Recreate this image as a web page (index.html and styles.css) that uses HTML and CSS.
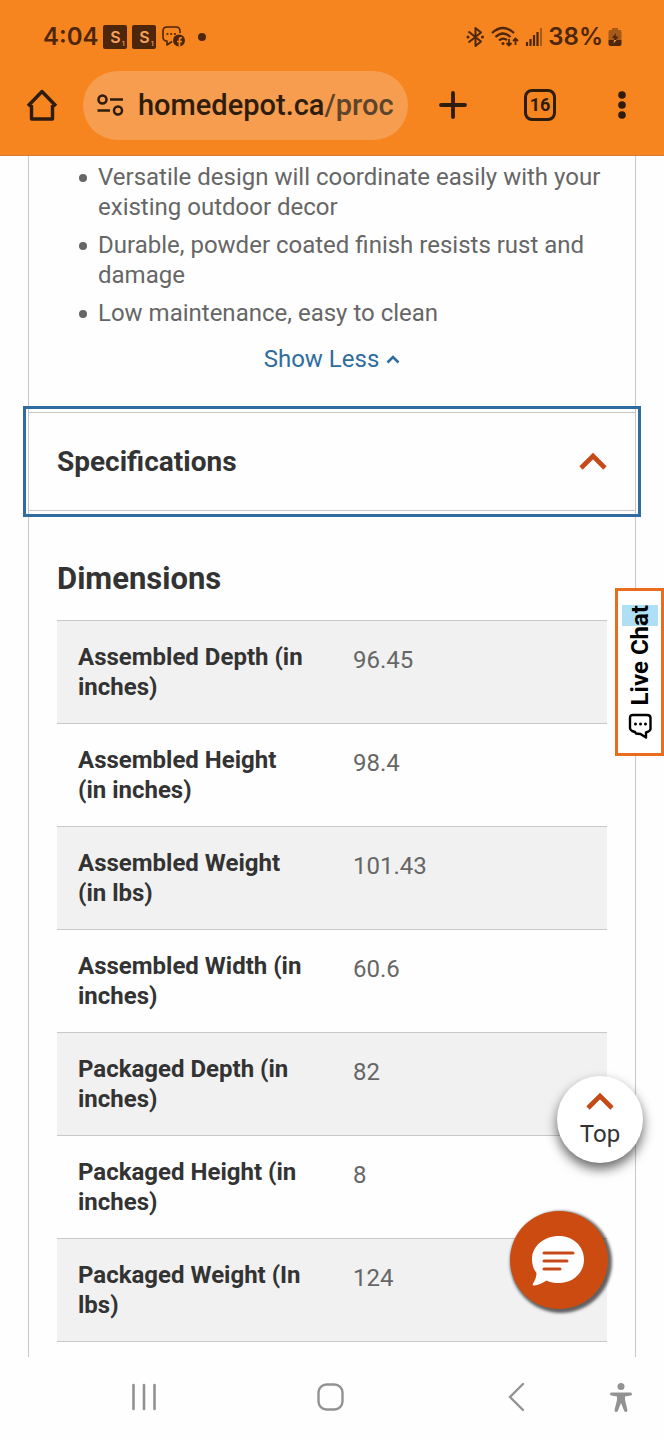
FILE: index.html
```html
<!DOCTYPE html>
<html lang="en">

<head>
    <meta charset="UTF-8">
    <meta name="viewport" content="width=device-width, initial-scale=1.0">
    <title>Specifications</title>
    <link rel="stylesheet" href="styles.css">
</head>

<body>
    <header class="header">
        <!-- status bar -->
        <div class="status">
            <span class="time">4:04</span>
            <span class="app">S<small>1</small></span>
            <span class="app">S<small>1</small></span>
            <svg width="26" height="24" viewBox="0 0 26 24">
                <path d="M11 16.500 L6 20 V16 Q2 16 2 12 V6 Q2 2 6 2 H15 Q19 2 19 6 V8" fill="none" stroke="#4d260b" stroke-width="1.600" stroke-linejoin="round" />
                <circle cx="6.500" cy="9" r="1.100" fill="#4d260b" />
                <circle cx="10.200" cy="9" r="1.100" fill="#4d260b" />
                <circle cx="13.900" cy="9" r="1.100" fill="#4d260b" />
                <circle cx="18" cy="15.500" r="6" fill="#4d260b" />
                <path d="M18.500 21.500 V14.500 Q18.500 12.500 21 12.800 M16 16.500 H21" fill="none" stroke="#f6851f" stroke-width="1.700" />
            </svg>
            <i class="more-dot"></i>
            <div class="status-right">
                <svg width="20" height="22" viewBox="0 0 20 22">
                    <path d="M3.500 5.500 L16 15.500 L10.500 20 V2 L16 6.500 L3.500 16.500" fill="none" stroke="#4d260b" stroke-width="2" stroke-linejoin="round" />
                    <circle cx="3" cy="11" r="1.500" fill="#4d260b" />
                    <circle cx="17.500" cy="11" r="1.500" fill="#4d260b" />
                </svg>
                <svg width="30" height="22" viewBox="0 0 30 22">
                    <path d="M2 7 Q13 -3 24 7 M5.500 11 Q13 4 20.500 11 M9 14.500 Q13 11 17 14" fill="none" stroke="#4d260b" stroke-width="2.200" />
                    <circle cx="13" cy="17.500" r="1.500" fill="#4d260b" />
                    <path d="M19 13 V19 M16.500 17 L19 19.500 L21.500 17 M25.500 19 V13 M23 15 L25.500 12.500 L28 15" fill="none" stroke="#4d260b" stroke-width="1.800" />
                </svg>
                <svg width="18" height="20" viewBox="0 0 18 20">
                    <path d="M2 19 V15 M5.500 19 V12 M9 19 V8 M12.500 19 V5" stroke="#4d260b" stroke-width="2.200" />
                    <path d="M16 19 V1" stroke="#a65a18" stroke-width="2" />
                </svg>
                <span class="battery">38%</span>
                <svg width="14" height="20" viewBox="0 0 14 20">
                    <path d="M4 1 H10 V3 H12 Q13.500 3 13.500 5 V13 H0.500 V5 Q0.500 3 2 3 H4 Z" fill="#a65a18" />
                    <path d="M0.500 13 H13.500 V17 Q13.500 19 11.500 19 H2.500 Q0.500 19 0.500 17 Z" fill="#4d260b" />
                    <path d="M8 6 L4 11 H6.500 L6 13 H8 L10.500 9.500 H7.500 Z" fill="#4d260b" />
                    <path d="M6.200 13 H8.500 L5.500 16.500 Z" fill="#f6a45a" />
                </svg>
            </div>
        </div>
        <!-- browser toolbar -->
        <div class="toolbar">
            <button class="home" aria-label="Home">
                <svg width="32" height="34" viewBox="0 0 32 34">
                    <path d="M5.500 17 V31 H26.500 V17 M2 18 L16 3.500 L30 18" fill="none" stroke="#2e1c0c" stroke-width="3.400" stroke-linejoin="round" />
                </svg>
            </button>
            <a class="url" href="#">
                <svg width="28" height="24" viewBox="0 0 28 24">
                    <g fill="none" stroke="#2e1c0c" stroke-width="2.500">
                        <circle cx="6.500" cy="6.500" r="4" />
                        <path d="M14 6.500 H27 M1.500 17.500 H14" />
                        <circle cx="22" cy="17.500" r="4" />
                    </g>
                </svg>
                <span class="url-text">homedepot.ca<span>/proc</span></span>
            </a>
            <button class="new-tab" aria-label="New tab">
                <svg width="28" height="28" viewBox="0 0 28 28">
                    <path d="M14 2 V26 M2 14 H26" stroke="#2e1c0c" stroke-width="3.800" stroke-linecap="round" />
                </svg>
            </button>
            <button class="tabs" aria-label="Tabs">16</button>
            <button class="menu" aria-label="Menu">
                <svg width="8" height="28" viewBox="0 0 8 28">
                    <g fill="#2e1c0c">
                        <circle cx="4" cy="4" r="3.800" />
                        <circle cx="4" cy="14" r="3.800" />
                        <circle cx="4" cy="24" r="3.800" />
                    </g>
                </svg>
            </button>
        </div>
    </header>

    <main class="product">
        <ul class="features">
            <li>Versatile design will coordinate easily with your existing outdoor decor</li>
            <li>Durable, powder coated finish resists rust and damage</li>
            <li>Low maintenance, easy to clean</li>
        </ul>
        <a class="show-less" href="#">Show Less
            <svg width="14" height="10" viewBox="0 0 14 10">
                <path d="M1.500 8.500 L7 3 L12.500 8.500" fill="none" stroke="#2f6c9f" stroke-width="2.600" />
            </svg>
        </a>
        <button class="accordion">
            Specifications
            <svg width="28" height="20" viewBox="0 0 28 20">
                <path d="M2 16 L14 4 L26 16" fill="none" stroke="#c64a17" stroke-width="4.600" />
            </svg>
        </button>
        <section class="specs">
            <h2>Dimensions</h2>
            <table>
                <tr>
                    <th scope="row">Assembled Depth (in inches)</th>
                    <td>96.45</td>
                </tr>
                <tr>
                    <th scope="row">Assembled Height (in inches)</th>
                    <td>98.4</td>
                </tr>
                <tr>
                    <th scope="row">Assembled Weight (in lbs)</th>
                    <td>101.43</td>
                </tr>
                <tr>
                    <th scope="row">Assembled Width (in inches)</th>
                    <td>60.6</td>
                </tr>
                <tr>
                    <th scope="row">Packaged Depth (in inches)</th>
                    <td>82</td>
                </tr>
                <tr>
                    <th scope="row">Packaged Height (in inches)</th>
                    <td>8</td>
                </tr>
                <tr>
                    <th scope="row">Packaged Weight (In lbs)</th>
                    <td>124</td>
                </tr>
            </table>
        </section>
    </main>

    <!-- floating buttons -->
    <button class="live-chat">
        <svg width="24" height="26" viewBox="0 0 24 26">
            <path d="M5 2 H19 Q22.500 2 22.500 5 V16 Q22.500 18 18 19.500 V24.500 L12.500 21 L8 20.500 L7 19 L4 18 Q2 17 2 15 V5 Q2 2 5 2 Z" fill="none" stroke="#000" stroke-width="2.400" stroke-linejoin="round" />
            <circle cx="7.500" cy="11" r="1.500" />
            <circle cx="12.500" cy="11" r="1.500" />
            <circle cx="17.500" cy="11" r="1.500" />
        </svg>
        <span>Live Ch<mark>at</mark></span>
    </button>
    <button class="top">
        <svg width="28" height="20" viewBox="0 0 28 20">
            <path d="M2 17 L14 5 L26 17" fill="none" stroke="#c64a17" stroke-width="4.600" />
        </svg>
        Top
    </button>
    <button class="chat" aria-label="Chat">
        <svg width="54" height="52" viewBox="0 0 54 52">
            <path d="M27 2 C41 2 52 12 52 25.500 C52 39 41 49 27 49 C22.500 49 18 48.500 14.500 46.500 C10 49.500 6 51 2 51.500 C0.500 51.500 0.500 50.500 1 49.500 C3 46 4.500 43 4.500 39 C1.500 35 0 31 0 25.500 C0 12 12 2 27 2 Z" fill="#fff" />
            <path d="M12 19 H41 M12 27 H35 M12 35 H28" stroke="#c64a17" stroke-width="3" stroke-linecap="round" />
        </svg>
    </button>

    <nav class="navbar">
        <div class="nav-keys">
            <button aria-label="Recent apps">
                <svg width="26" height="30" viewBox="0 0 26 30">
                    <path d="M2.500 3 V27 M13 3 V27 M23.500 3 V27" stroke="#929292" stroke-width="2.600" stroke-linecap="round" />
                </svg>
            </button>
            <button aria-label="Home">
                <svg width="28" height="30" viewBox="0 0 28 30">
                    <rect x="1.500" y="2.500" width="24" height="25" rx="8" fill="none" stroke="#929292" stroke-width="2.400" />
                </svg>
            </button>
            <button aria-label="Back">
                <svg width="20" height="30" viewBox="0 0 20 30">
                    <path d="M18 2 L5 15 L18 28" fill="none" stroke="#929292" stroke-width="2.400" stroke-linecap="round" />
                </svg>
            </button>
        </div>
        <button aria-label="Accessibility">
            <svg width="24" height="30" viewBox="0 0 24 30">
                <g fill="#929292">
                    <circle cx="12" cy="4.500" r="3.500" />
                    <path d="M2.500 10.500 H21.500 Q23 10.500 23 12 Q23 13.500 21.500 13.500 L16 14.500 V18 L18.500 28 Q18.500 30 17 30 Q15.500 30 15 28.500 L12 21 L9 28.500 Q8.500 30 7 30 Q5.500 30 5.500 28 L8 18 V14.500 L2.500 13.500 Q1 13.500 1 12 Q1 10.500 2.500 10.500 Z" />
                </g>
            </svg>
        </button>
    </nav>
</body>

</html>
```
FILE: styles.css
```css
* {
    box-sizing: border-box;
}

body {
    position: relative;
    margin: 0;
    background-color: #fefefe;
    color: #666;
    font-family: Roboto, "Liberation Sans", sans-serif;
    font-size: 24px;
    line-height: 30px;
}

button {
    margin: 0;
    padding: 0;
    border: 0;
    background: none;
    font: inherit;
    color: inherit;
}

a {
    text-decoration: none;
}

svg {
    display: block;
    flex: none;
}

/* header */
.header {
    background-color: #f6851f;
    border-bottom: 1px solid #d67b35;
    color: #2e1c0c;
}

.status {
    display: flex;
    align-items: center;
    height: 70px;
    padding: 4px 42px 0 43px;
    color: #4d260b;
    font-family: Inter, Roboto, sans-serif;
    font-size: 24px;
    font-weight: 600;
}

.time {
    margin-right: 5px;
}

.app {
    position: relative;
    width: 24px;
    height: 24px;
    margin-right: 5px;
    border-radius: 2px;
    background-color: #4d260b;
    color: #f6a45a;
    font-size: 16px;
    line-height: 24px;
    text-align: center;
}

.app small {
    position: absolute;
    right: 3px;
    bottom: 2px;
    font-size: 6px;
    line-height: 6px;
}

.more-dot {
    width: 8px;
    height: 8px;
    margin-left: 11px;
    border-radius: 50%;
    background-color: #4d260b;
}

.status-right {
    display: flex;
    align-items: center;
    gap: 5px;
    margin-left: auto;
}

.toolbar {
    display: flex;
    align-items: center;
    height: 85px;
    padding: 0 38px 15px 26px;
}

.url {
    display: flex;
    flex: 1;
    align-items: center;
    gap: 14px;
    min-width: 0;
    height: 69px;
    margin: 0 31px 0 25px;
    padding: 0 12px 0 13px;
    border-radius: 35px;
    background-color: #f79d4f;
    color: #2e1c0c;
}

.url-text {
    font-size: 29px;
    font-weight: 500;
    line-height: 40px;
    white-space: nowrap;
}

.url-text span {
    color: #5c452c;
}

.tabs {
    width: 32px;
    height: 32px;
    margin: 0 62px 0 57px;
    border: 3px solid #2e1c0c;
    border-radius: 8px;
    font-size: 18px;
    font-weight: 700;
    line-height: 26px;
}

/* product card */
.product {
    display: flow-root;
    margin: 0 28px;
    border: solid #c8c8c8;
    border-width: 0 1px;
}

.features {
    margin: 6px 0 16px;
    padding: 0 28px 0 50px;
    list-style: none;
}

.features li {
    display: flex;
    gap: 11px;
    margin-bottom: 8px;
}

.features li::before {
    content: "";
    flex: none;
    width: 8px;
    height: 8px;
    margin-top: 12px;
    border-radius: 50%;
    background-color: #666;
}

.show-less {
    display: flex;
    align-items: center;
    justify-content: center;
    gap: 7px;
    color: #2f6c9f;
}

.accordion {
    display: flex;
    align-items: center;
    justify-content: space-between;
    width: 100%;
    height: 99px;
    margin-top: 38px;
    padding: 0 28px;
    border: solid #c8c8c8;
    border-width: 1px 0;
    outline: 3px solid #2f6c9f;
    outline-offset: 3px;
    color: #333;
    font-size: 28px;
    font-weight: 700;
}

.specs {
    padding: 0 28px 15px;
}

.specs h2 {
    margin: 48px 0 21px;
    color: #333;
    font-size: 31px;
    line-height: 40px;
}

.specs table {
    width: 100%;
    border-collapse: collapse;
    border-top: 1px solid #c8c8c8;
}

.specs tr {
    border-bottom: 1px solid #c8c8c8;
}

.specs tr:nth-child(odd) {
    background-color: #f1f1f1;
}

.specs th,
.specs td {
    padding: 21px;
    text-align: left;
    vertical-align: top;
}

.specs th {
    width: 50%;
    padding-right: 26px;
    color: #333;
    font-weight: 700;
}

.specs td {
    padding-top: 24px;
}

/* floating buttons */
.live-chat {
    position: absolute;
    top: 588px;
    right: 0;
    display: flex;
    align-items: center;
    gap: 8px;
    width: 49px;
    height: 168px;
    padding: 14px 0;
    border: 3px solid #e96d1d;
    background-color: #fff;
    color: #000;
    font-weight: 700;
    white-space: nowrap;
    writing-mode: sideways-lr;
}

.live-chat mark {
    padding-block: 4px;
    background-color: #afdff4;
}

.top {
    position: absolute;
    top: 1076px;
    right: 21px;
    display: flex;
    flex-direction: column;
    align-items: center;
    gap: 8px;
    width: 86px;
    height: 87px;
    padding-top: 15px;
    border-radius: 50%;
    background-color: #fff;
    box-shadow: 0 6px 12px rgba(0, 0, 0, .6);
    color: #333;
}

.chat {
    position: absolute;
    top: 1211px;
    right: 56px;
    display: flex;
    align-items: center;
    justify-content: center;
    width: 98px;
    height: 98px;
    border-radius: 50%;
    background-color: #cb4b11;
    box-shadow: 2px 2px 3px 2px rgba(0, 0, 0, .6);
}

/* system navigation */
.navbar {
    display: flex;
    align-items: center;
    gap: 84px;
    height: 83px;
    padding: 0 31px 3px 131px;
}

.nav-keys {
    display: flex;
    flex: 1;
    justify-content: space-between;
}
```
